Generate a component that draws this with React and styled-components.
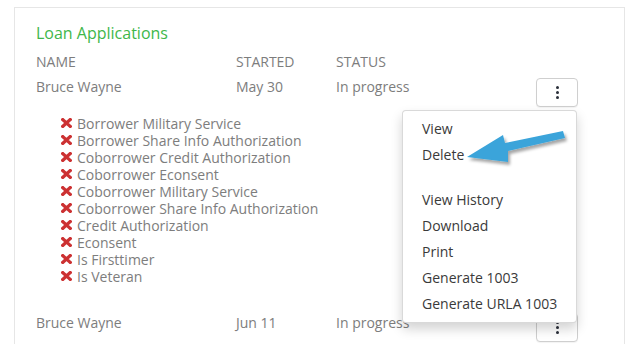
import React from "react";
import styled, { createGlobalStyle } from "styled-components";

const Global = createGlobalStyle`
  html, body { margin: 0; padding: 0; background: #fff; }
  body { font-family: "Open Sans", "Liberation Sans", sans-serif; overflow: hidden; }
  * { box-sizing: border-box; }
`;

const Page = styled.div`
  position: relative;
  width: 629px;
  height: 344px;
  overflow: hidden;
  padding: 7px 0 0 14px;
`;

const Card = styled.section`
  width: 611px;
  min-height: 400px;
  border: 1px solid #e6e6e6;
  padding: 14px 0 0 21px;
`;

const Title = styled.h2`
  margin: 0 0 8px;
  font-size: 16px;
  line-height: 22px;
  font-weight: 400;
  color: #40b74a;
`;

const Grid = styled.div`
  display: grid;
  grid-template-columns: 200px 100px 200px 42px;
  align-items: start;
`;

const HeadCell = styled.div`
  font-size: 14px;
  line-height: 20px;
  color: #7d7d7d;
`;

const Cell = styled.div`
  font-size: 14px;
  line-height: 20px;
  color: #7d7d7d;
  padding-top: 5px;
`;

const ActionCell = styled.div`
  position: relative;
  padding-top: ${(p) => p.$offset}px;
`;

const KebabButton = styled.button`
  width: 42px;
  height: 29px;
  border: 1px solid #cfcfcf;
  border-radius: 4px;
  background: #fff;
  box-shadow: 0 1px 1px rgba(0, 0, 0, 0.05);
  display: flex;
  flex-direction: column;
  align-items: center;
  justify-content: center;
  gap: 2px;
  padding: 0;
`;

const Dot = styled.span`
  width: 3px;
  height: 3px;
  border-radius: 50%;
  background: #2a2f3a;
`;

const Menu = styled.ul`
  position: absolute;
  top: 38px;
  right: 1px;
  width: 175px;
  margin: 0;
  padding: 5px 0;
  list-style: none;
  background: #fff;
  border: 1px solid rgba(0, 0, 0, 0.15);
  border-radius: 4px;
  box-shadow: 0 6px 12px rgba(0, 0, 0, 0.175);
  z-index: 5;
`;

const MenuItem = styled.li`
  padding: 0 19px 0 19px;
  font-size: 14px;
  line-height: 26px;
  color: #3a3a3a;
  white-space: nowrap;
`;

const Divider = styled.li`
  height: 1px;
  margin: 9px 0;
  background: transparent;
`;

const Checklist = styled.ul`
  list-style: none;
  margin: 8px 0 23px;
  padding: 0 0 0 25px;
`;

const CheckItem = styled.li`
  display: flex;
  align-items: center;
  gap: 5px;
  font-size: 14px;
  line-height: 17px;
  color: #7d7d7d;
`;

const XIcon = () => (
  <svg width="11" height="10" viewBox="0 0 11 10" style={{ flex: "none", marginTop: "-1px" }}>
    <path
      d="M1.8 1.6 L9.2 8.4 M9.2 1.6 L1.8 8.4"
      stroke="#cc3132"
      strokeWidth="3.3"
      strokeLinecap="square"
    />
  </svg>
);

const ArrowLayer = styled.svg`
  position: absolute;
  left: 0;
  top: 0;
  width: 629px;
  height: 344px;
  pointer-events: none;
  z-index: 10;
`;

const items = [
  "Borrower Military Service",
  "Borrower Share Info Authorization",
  "Coborrower Credit Authorization",
  "Coborrower Econsent",
  "Coborrower Military Service",
  "Coborrower Share Info Authorization",
  "Credit Authorization",
  "Econsent",
  "Is Firsttimer",
  "Is Veteran",
];

const Kebab = () => (
  <KebabButton aria-label="actions">
    <Dot />
    <Dot />
    <Dot />
  </KebabButton>
);

export default function App() {
  return (
    <Page>
      <Global />
      <Card>
        <Title>Loan Applications</Title>
        <Grid>
          <HeadCell>NAME</HeadCell>
          <HeadCell>STARTED</HeadCell>
          <HeadCell>STATUS</HeadCell>
          <HeadCell />
        </Grid>
        <Grid>
          <Cell>Bruce Wayne</Cell>
          <Cell>May 30</Cell>
          <Cell>In progress</Cell>
          <ActionCell $offset={6}>
            <Kebab />
            <Menu>
              <MenuItem>View</MenuItem>
              <MenuItem>Delete</MenuItem>
              <Divider />
              <MenuItem>View History</MenuItem>
              <MenuItem>Download</MenuItem>
              <MenuItem>Print</MenuItem>
              <MenuItem>Generate 1003</MenuItem>
              <MenuItem>Generate URLA 1003</MenuItem>
            </Menu>
          </ActionCell>
        </Grid>
        <Checklist>
          {items.map((t) => (
            <CheckItem key={t}>
              <XIcon />
              {t}
            </CheckItem>
          ))}
        </Checklist>
        <Grid>
          <Cell>Bruce Wayne</Cell>
          <Cell>Jun 11</Cell>
          <Cell>In progress</Cell>
          <ActionCell $offset={5}>
            <Kebab />
          </ActionCell>
        </Grid>
      </Card>
      <ArrowLayer viewBox="0 0 629 344">
        <defs>
          <filter id="sh" x="-20%" y="-40%" width="140%" height="180%">
            <feDropShadow dx="2" dy="3" stdDeviation="1.6" floodColor="#000" floodOpacity="0.35" />
          </filter>
        </defs>
        <polygon
          points="467,157 503,135 505,143 563,131 565,138 508,151 508,162"
          fill="#3ba4da"
          filter="url(#sh)"
        />
      </ArrowLayer>
    </Page>
  );
}
